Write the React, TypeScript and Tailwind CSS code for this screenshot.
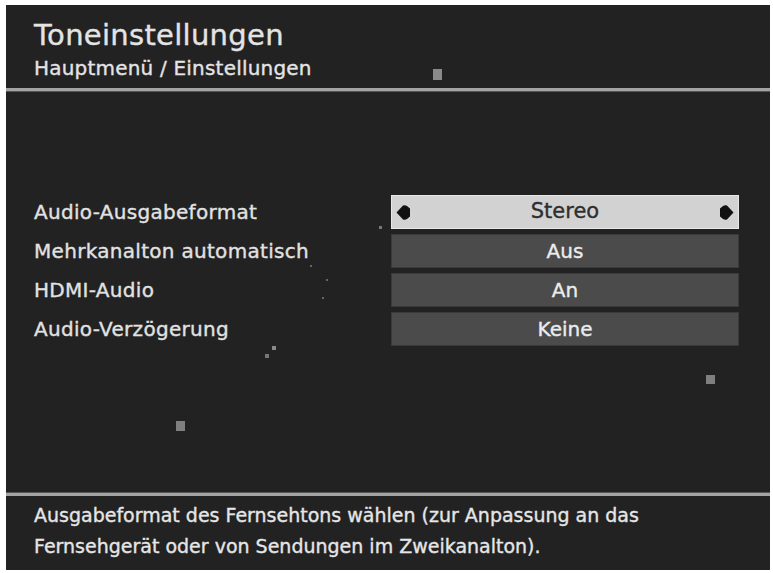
import React from "react";

const rows = [
  { label: "Audio-Ausgabeformat", value: "Stereo", active: true },
  { label: "Mehrkanalton automatisch", value: "Aus", active: false },
  { label: "HDMI-Audio", value: "An", active: false },
  { label: "Audio-Verzögerung", value: "Keine", active: false },
];

function Arrow({ flip }: { flip?: boolean }) {
  return (
    <svg width="15" height="17" viewBox="0 0 15 17" className={flip ? "-scale-x-100" : ""}>
      <path d="M0.5 8.5 L7 1.5 Q9 0.8 11 2 L14 4.5 L14 12.5 L11 15 Q9 16.2 7 15.5 Z" fill="#111" />
    </svg>
  );
}

export default function App() {
  return (
    <div
      className="w-[773px] h-[573px] bg-white pt-[5px] pl-[6px] pr-[3px] pb-[3px]"
      style={{ fontFamily: '"DejaVu Sans", "Noto Sans", sans-serif' }}
    >
      <div className="relative w-full h-full bg-[#222222] flex flex-col text-[#e4e4e4] [-webkit-text-stroke:0.35px]">
        {/* header */}
        <div className="h-[83px] pl-[28px] pt-[13px] flex flex-col">
          <div className="text-[29px] leading-[34px] tracking-[0.3px]">Toneinstellungen</div>
          <div className="text-[20px] leading-[24px] mt-[4px] tracking-[0.2px]">Hauptmenü / Einstellungen</div>
        </div>
        <div className="h-[4px] bg-[#a3a3a3] border-b border-[#555]" />

        {/* main */}
        <div className="flex-1 flex flex-col pt-[103px] pl-[28px] pr-[31px]">
          <div className="flex flex-col gap-[5px]">
            {rows.map((r) => (
              <div key={r.label} className="flex items-center h-[34px]">
                <div className="w-[357px] text-[20px] leading-[24px] text-[#e2e2e2] tracking-[0.3px]">{r.label}</div>
                <div
                  className={
                    r.active
                      ? "flex-1 h-full flex items-center justify-between px-[4px] bg-[#d2d2d2] border border-[#e8e8e8]"
                      : "flex-1 h-full flex items-center justify-center bg-[#4b4b4b] border border-[#3a3a3a]"
                  }
                >
                  {r.active ? (
                    <>
                      <Arrow />
                      <span className="text-[21px] text-[#2e2e2e]">{r.value}</span>
                      <Arrow flip />
                    </>
                  ) : (
                    <span className="text-[20px] text-[#ececec]">{r.value}</span>
                  )}
                </div>
              </div>
            ))}
          </div>
        </div>

        {/* footer */}
        <div className="h-[4px] bg-[#a3a3a3] border-t border-[#555]" />
        <div className="h-[74px] pl-[28px] pt-[4px] text-[19px] leading-[31px] text-[#e6e6e6]">
          <div>Ausgabeformat des Fernsehtons wählen (zur Anpassung an das</div>
          <div>Fernsehgerät oder von Sendungen im Zweikanalton).</div>
        </div>

        {/* noise specks */}
        <div className="absolute left-[427px] top-[64px] w-[9px] h-[11px] bg-[#8a8a8a]" />
        <div className="absolute left-[700px] top-[370px] w-[9px] h-[9px] bg-[#7f7f7f]" />
        <div className="absolute left-[170px] top-[416px] w-[9px] h-[10px] bg-[#7f7f7f]" />
        <div className="absolute left-[373px] top-[221px] w-[3px] h-[3px] bg-[#777]" />
        <div className="absolute left-[304px] top-[260px] w-[2px] h-[2px] bg-[#666]" />
        <div className="absolute left-[320px] top-[274px] w-[2px] h-[2px] bg-[#666]" />
        <div className="absolute left-[316px] top-[292px] w-[2px] h-[2px] bg-[#666]" />
        <div className="absolute left-[266px] top-[341px] w-[4px] h-[4px] bg-[#8a8a8a]" />
        <div className="absolute left-[259px] top-[349px] w-[4px] h-[4px] bg-[#777]" />
      </div>
    </div>
  );
}
